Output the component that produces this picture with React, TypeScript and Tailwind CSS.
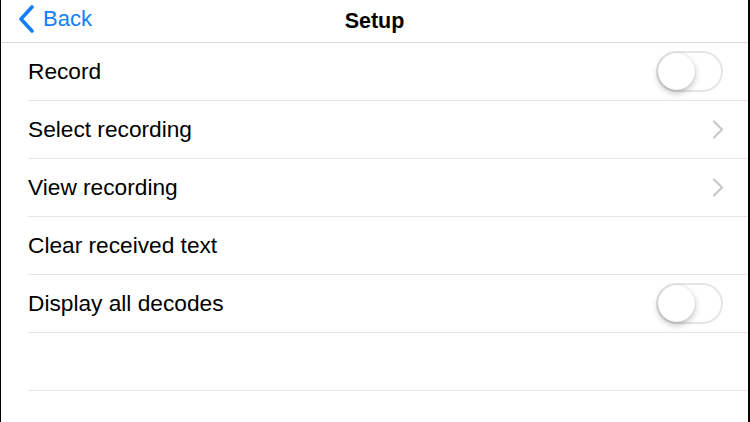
function Toggle() {
  return (
    <div className="relative w-[67px] h-[41px] rounded-full border-2 border-[#e5e5ea] bg-white">
      <div className="absolute left-0 top-0 w-[37px] h-[37px] rounded-full bg-white shadow-[0_3px_6px_rgba(0,0,0,0.25),0_0_1px_rgba(0,0,0,0.2)]" />
    </div>
  )
}

function Chevron() {
  return (
    <svg width="12" height="19" viewBox="0 0 12 19" fill="none" className="mr-[-1px]">
      <path d="M2 1.5 L10 9.5 L2 17.5" stroke="#c7c7cc" strokeWidth="2.2" strokeLinecap="round" strokeLinejoin="round" />
    </svg>
  )
}

const rows: { label: string; right: 'toggle' | 'chevron' | null }[] = [
  { label: 'Record', right: 'toggle' },
  { label: 'Select recording', right: 'chevron' },
  { label: 'View recording', right: 'chevron' },
  { label: 'Clear received text', right: null },
  { label: 'Display all decodes', right: 'toggle' },
  { label: '', right: null },
]

export default function App() {
  return (
    <div className="w-[750px] h-[422px] bg-white overflow-hidden border-l border-r-2 border-black font-['Liberation_Sans',Arial,sans-serif]">
      <div className="relative h-[43px] flex items-center justify-center border-b border-[#d9d9dc]">
        <div className="absolute left-[16px] top-[5px] flex items-center gap-[8px] text-[#147efb]">
          <svg width="18" height="28" viewBox="0 0 18 28" fill="none">
            <path d="M15 2 L4 14 L15 26" stroke="#147efb" strokeWidth="3.6" strokeLinecap="round" strokeLinejoin="round" />
          </svg>
          <span className="text-[22px] leading-none">Back</span>
        </div>
        <span className="text-[21.5px] font-bold text-black">Setup</span>
      </div>
      <div>
        {rows.map((r, i) => (
          <div key={i} className="pl-[27px]">
            <div className="h-[58px] flex items-center justify-between pr-[25px] border-b border-[#e5e5e8]">
              <span className="text-[22.7px] text-black">{r.label}</span>
              {r.right === 'toggle' && <Toggle />}
              {r.right === 'chevron' && <Chevron />}
            </div>
          </div>
        ))}
      </div>
    </div>
  )
}
